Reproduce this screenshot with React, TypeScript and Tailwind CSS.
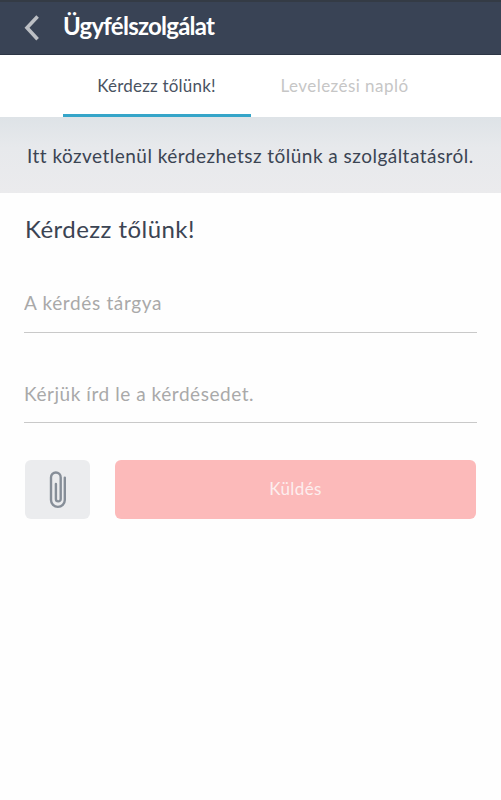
import React from "react"

const tabs = [
    { id: "ask", name: "Kérdezz tőlünk!", active: true, spacing: "tracking-[0.2px]" },
    { id: "log", name: "Levelezési napló", active: false, spacing: "tracking-[0.45px]" },
]

function BackIcon() {
    return (
        <svg width="16" height="26" viewBox="0 0 16 26" fill="none" stroke="#bcbfc4" strokeWidth="3.6">
            <path d="M13.6 1.6 3 12.7l10.6 11.5" />
        </svg>
    )
}

function PaperclipIcon() {
    return (
        <svg width="18" height="38" viewBox="0 0 18 38" fill="none" stroke="#868e98" strokeWidth="2.4" strokeLinecap="round">
            <path d="M15.8 6.6V29a6.9 6.9 0 0 1-13.8 0V6.4a4.85 4.85 0 0 1 9.7 0V28a2.4 2.4 0 0 1-4.8 0V13" />
        </svg>
    )
}

export default function App() {
    return (
        <div className="min-h-screen bg-[#fefefe] font-['Lato',sans-serif] text-[#2f3848]">
            {/* HEADER */}
            <header className="flex h-[55px] items-center border-t-2 border-b border-t-[#343b45] border-b-[#2c3545] bg-[#394355] pl-6">
                <BackIcon />
                <h1 className="ml-[23px] pb-[5px] text-[24px] leading-7 font-bold tracking-[-0.75px] whitespace-nowrap text-white">Ügyfélszolgálat</h1>
            </header>
            {/* TABS */}
            <nav className="flex h-[62px] justify-center bg-white">
                {tabs.map((tab) => (
                    <button
                        key={tab.id}
                        className={`w-[188px] border-b-3 pt-[3px] text-[17px] whitespace-nowrap ${tab.spacing} ${tab.active ? "border-[#35a5c9] text-[#4a5362]" : "border-transparent text-[#c6c6c6]"}`}
                    >
                        {tab.name}
                    </button>
                ))}
            </nav>
            {/* INFO */}
            <div className="flex h-[76px] items-center bg-linear-to-b from-[#dee3e7] via-[#e7e9ec] via-40% to-[#ebebed] pt-[2px] pl-[27px]">
                <p className="text-[19px] tracking-[0.47px] whitespace-nowrap text-[#3b4453]">Itt közvetlenül kérdezhetsz tőlünk a szolgáltatásról.</p>
            </div>
            {/* FORM */}
            <form className="flex flex-col px-6 pt-[20px]">
                <h2 className="pl-px text-[24px] leading-8 tracking-[0.45px] text-[#3b4453]">Kérdezz tőlünk!</h2>
                <input
                    className="mt-[29px] h-[59px] border-b border-[#c9c9c9] pb-[2px] text-[19px] tracking-[0.65px] outline-none placeholder:text-[#a9a9a9]"
                    placeholder="A kérdés tárgya"
                />
                <input
                    className="mt-[31px] h-[59px] border-b border-[#c9c9c9] text-[19px] tracking-[0.55px] outline-none placeholder:text-[#a9a9a9]"
                    placeholder="Kérjük írd le a kérdésedet."
                />
                <div className="mt-[37px] flex h-[59px] gap-[25px] pl-px">
                    <button type="button" className="flex w-[65px] items-center justify-center rounded-md bg-[#ebecee]">
                        <PaperclipIcon />
                    </button>
                    <button type="button" className="w-[361px] rounded-md bg-[#fcbaba] pb-px text-[17px] tracking-[0.4px] text-[#fdeeee]">Küldés</button>
                </div>
            </form>
        </div>
    );
}
